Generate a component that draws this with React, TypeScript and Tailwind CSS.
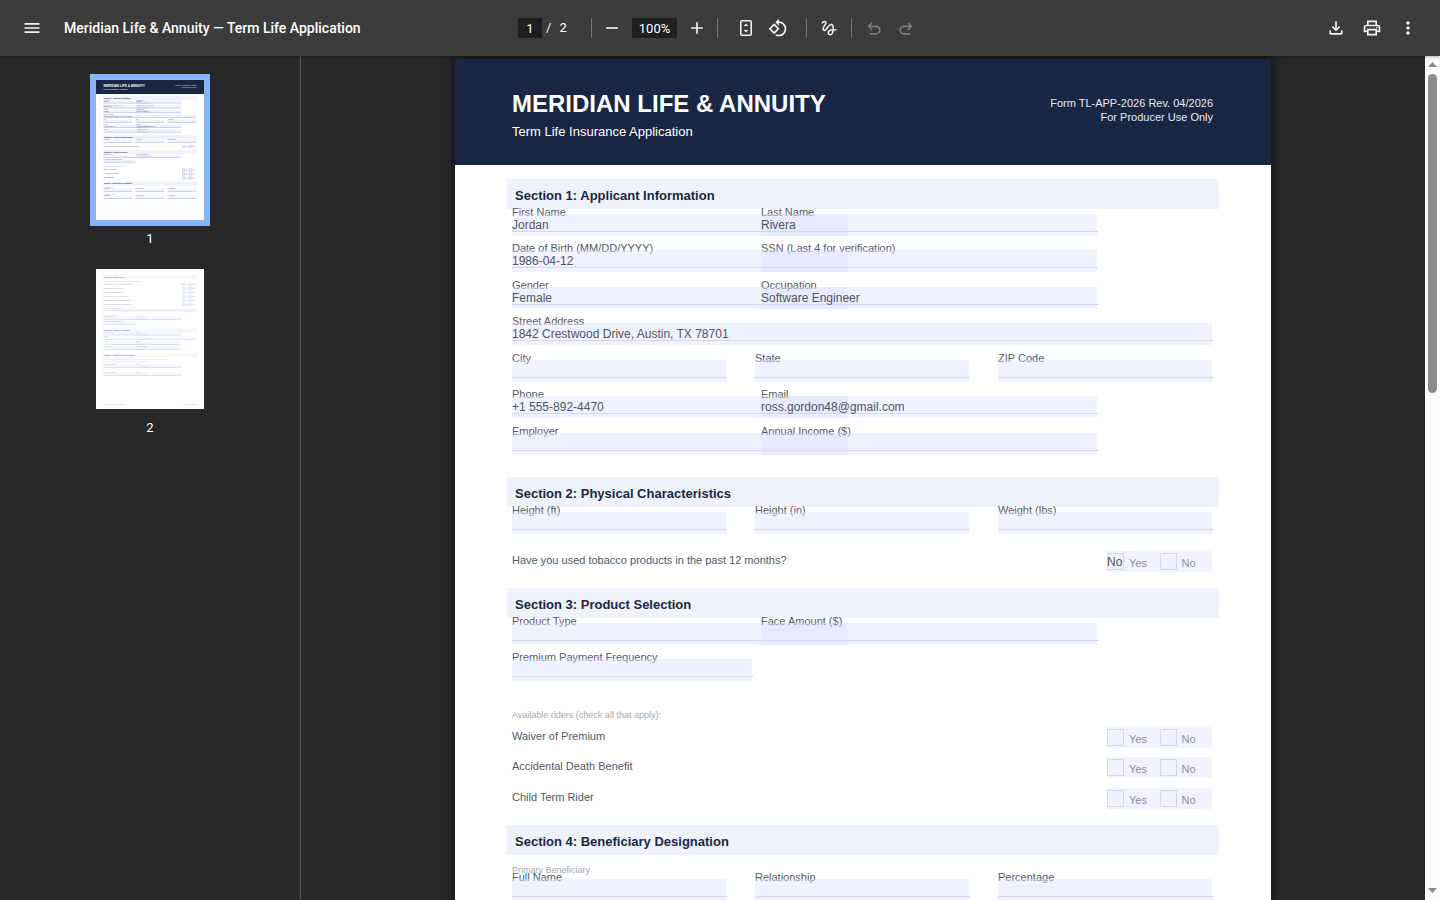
import { useId, useState } from "react";
import type { ReactNode } from "react";
import {
  MdAdd,
  MdMenu,
  MdMoreVert,
  MdOutlinePrint,
  MdOutlineRotate90DegreesCcw,
  MdRemove,
} from "react-icons/md";

interface FieldDef {
  label: string;
  value?: string;
}

type RowLayout = "full" | "half" | "pair" | "third";

interface RowDef {
  layout: RowLayout;
  fields: FieldDef[];
}

const APPLICANT_ROWS: RowDef[] = [
  { layout: "pair", fields: [{ label: "First Name", value: "Jordan" }, { label: "Last Name", value: "Rivera" }] },
  { layout: "pair", fields: [{ label: "Date of Birth (MM/DD/YYYY)", value: "1986-04-12" }, { label: "SSN (Last 4 for verification)" }] },
  { layout: "pair", fields: [{ label: "Gender", value: "Female" }, { label: "Occupation", value: "Software Engineer" }] },
  { layout: "full", fields: [{ label: "Street Address", value: "1842 Crestwood Drive, Austin, TX 78701" }] },
  { layout: "third", fields: [{ label: "City" }, { label: "State" }, { label: "ZIP Code" }] },
  { layout: "pair", fields: [{ label: "Phone", value: "+1 555-892-4470" }, { label: "Email", value: "ross.gordon48@gmail.com" }] },
  { layout: "pair", fields: [{ label: "Employer" }, { label: "Annual Income ($)" }] },
];

const PHYSICAL_ROWS: RowDef[] = [
  { layout: "third", fields: [{ label: "Height (ft)" }, { label: "Height (in)" }, { label: "Weight (lbs)" }] },
];

const PRODUCT_ROWS: RowDef[] = [
  { layout: "pair", fields: [{ label: "Product Type" }, { label: "Face Amount ($)" }] },
  { layout: "half", fields: [{ label: "Premium Payment Frequency" }] },
];

const BENEFICIARY_ROWS: RowDef[] = [
  { layout: "third", fields: [{ label: "Full Name" }, { label: "Relationship" }, { label: "Percentage" }] },
];

const RIDERS = ["Waiver of Premium", "Accidental Death Benefit", "Child Term Rider"];

const ROW_CLASS: Record<RowLayout, string> = {
  full: "grid grid-cols-1",
  half: "grid grid-cols-[241px]",
  pair: "flex",
  third: "grid grid-cols-3 gap-x-7",
};

function Field({ label, value = "", className = "" }: FieldDef & { className?: string }) {
  const id = useId();
  const [text, setText] = useState(value);

  return (
    <div className={`flex min-w-0 flex-col ${className}`}>
      <label htmlFor={id} className="h-3 text-[11px] leading-[10px] whitespace-nowrap text-[#525868]">
        {label}
      </label>
      {/* printed rule, the fillable area sits on top of it */}
      <span className="mt-3 h-px shrink-0 bg-[#c5d0e4]" />
      <input
        id={id}
        type="text"
        value={text}
        onChange={(e) => setText(e.target.value)}
        className="-mt-[18px] mr-px h-[22px] bg-[#dee2ff]/45 text-xs text-[#52545f] outline-none"
      />
    </div>
  );
}

function FieldRows({ rows, className = "-mt-[2px]" }: { rows: RowDef[]; className?: string }) {
  return (
    <div className={`pr-[6px] pl-[5px] ${className}`}>
      {rows.map((row) => (
        <div key={row.fields[0].label} className={`pb-[7px] even:pb-2 ${ROW_CLASS[row.layout]}`}>
          {row.fields.map((f, i) => (
            <Field
              key={f.label}
              {...f}
              className={row.layout !== "pair" ? "" : i === 0 ? "w-[337px]" : "-ml-[88px] w-[337px]"}
            />
          ))}
        </div>
      ))}
    </div>
  );
}

function YesNo({ question, answer }: { question: string; answer?: string }) {
  return (
    <fieldset className="flex justify-between pr-[7px] pl-[5px] even:pb-px">
      <span className="text-[11px] leading-[19px] text-[#525868]">{question}</span>
      <span className="flex h-[21px] w-[105px] bg-[#f0f2fe] pt-[2px]">
        {["Yes", "No"].map((option) => (
          <label key={option} className="relative flex w-[53px] gap-[5px] text-[11px] leading-[21px] text-[#8a90a6]">
            <input
              type="checkbox"
              aria-label={`${question} ${option}`}
              className="h-[17px] w-[17px] appearance-none border border-[#d0d9ec] checked:bg-[#8ab4f8]"
            />
            {option}
            {answer && option === "Yes" && (
              <span className="absolute top-0 left-0 text-xs leading-[18px] text-[#52545f]">{answer}</span>
            )}
          </label>
        ))}
      </span>
    </fieldset>
  );
}

function Section({ title, className = "mb-4", children }: { title: string; className?: string; children: ReactNode }) {
  return (
    <section className={className}>
      <h2 className="h-[30px] bg-[#eff2fa] pl-2 text-[13px] leading-[34px] font-bold text-[#1a2744]">{title}</h2>
      {children}
    </section>
  );
}

function Hint({ className, children }: { className: string; children: ReactNode }) {
  return <p className={`pl-[5px] text-[9px] leading-3 text-[#a3a6b0] ${className}`}>{children}</p>;
}

function ApplicationPage() {
  return (
    <article className="min-h-[1056px] w-full max-w-[816px] shrink-0 bg-white font-['Liberation_Sans',Arial,sans-serif] shadow-[0_0_8px_2px_rgba(0,0,0,0.5)]">
      <header className="flex h-[106px] items-start justify-between bg-[#1a2744] pr-[58px] pl-[57px] text-white">
        <div className="pt-[31px]">
          <h1 className="text-2xl leading-7 font-bold">MERIDIAN LIFE &amp; ANNUITY</h1>
          <p className="mt-[6px] text-[13px] leading-4">Term Life Insurance Application</p>
        </div>
        <p className="pt-[37px] text-right text-[11px] leading-[14px] text-[#e6e9f0]">
          Form TL-APP-2026 Rev. 04/2026
          <br />
          For Producer Use Only
        </p>
      </header>
      <div className="px-[52px] pt-[14px]">
        <Section title="Section 1: Applicant Information" className="mb-[15px]">
          <FieldRows rows={APPLICANT_ROWS} />
        </Section>
        <Section title="Section 2: Physical Characteristics">
          <FieldRows rows={PHYSICAL_ROWS} />
          <div className="mt-[10px]">
            <YesNo question="Have you used tobacco products in the past 12 months?" answer="No" />
          </div>
        </Section>
        <Section title="Section 3: Product Selection">
          <FieldRows rows={PRODUCT_ROWS} />
          <Hint className="mt-5 mb-[6px]">Available riders (check all that apply):</Hint>
          <div className="flex flex-col gap-[9px]">
            {RIDERS.map((r) => (
              <YesNo key={r} question={r} />
            ))}
          </div>
        </Section>
        <Section title="Section 4: Beneficiary Designation">
          <Hint className="mt-[9px]">Primary Beneficiary</Hint>
          <FieldRows rows={BENEFICIARY_ROWS} className="-mt-1" />
        </Section>
      </div>
    </article>
  );
}

/* ---------- thumbnails, drawn in page units (816 x 1056) ---------- */

function ThumbBar({ y, title }: { y: number; title: string }) {
  return (
    <>
      <rect x="52" y={y} width="712" height="30" fill="#eff2fa" />
      <text x="60" y={y + 21} fontSize="13" fontWeight="bold" fill="#1a2744">{title}</text>
    </>
  );
}

function ThumbRow({ y, layout, fields }: RowDef & { y: number }) {
  const width = { full: 700, half: 240, pair: 336, third: 215 }[layout];
  const pitch = layout === "pair" ? 249 : 243;
  return (
    <>
      {fields.map((f, i) => (
        <g key={f.label}>
          <text x={57 + i * pitch} y={y + 3} fontSize="11" fill="#4b5160">{f.label}</text>
          <rect x={57 + i * pitch} y={y + 17} width={width} height="5" fill="#9fb1d4" />
          <rect x={57 + i * pitch} y={y} width={width} height="22" fill="#dee2ff" fillOpacity="0.45" />
          <text x={57 + i * pitch} y={y + 15} fontSize="12" fill="#4d4f5a">{f.value}</text>
        </g>
      ))}
    </>
  );
}

function ThumbYesNo({ y, question }: { y: number; question: string }) {
  return (
    <>
      <text x="57" y={y + 13} fontSize="11" fill="#4b5160">{question}</text>
      <rect x="652" y={y} width="105" height="21" fill="#f0f2fe" />
      <rect x="653" y={y + 2} width="17" height="17" fill="none" stroke="#b3c1de" strokeWidth="4" />
      <rect x="706" y={y + 2} width="17" height="17" fill="none" stroke="#b3c1de" strokeWidth="4" />
      <text x="674" y={y + 16} fontSize="11" fill="#8a90a6">Yes</text>
      <text x="727" y={y + 16} fontSize="11" fill="#8a90a6">No</text>
    </>
  );
}

function FirstThumb() {
  return (
    <svg viewBox="0 0 816 1056" className="block h-[140px] w-[108px] bg-white" preserveAspectRatio="none" fontFamily="Liberation Sans, Arial, sans-serif" aria-hidden="true">
      <rect width="816" height="106" fill="#1a2744" />
      <text x="57" y="53" fontSize="24" fontWeight="bold" fill="#fff">MERIDIAN LIFE &amp; ANNUITY</text>
      <text x="57" y="77" fontSize="13" fill="#fff">Term Life Insurance Application</text>
      <text x="758" y="48" fontSize="11" fill="#e6e9f0" textAnchor="end">Form TL-APP-2026 Rev. 04/2026</text>
      <text x="758" y="62" fontSize="11" fill="#e6e9f0" textAnchor="end">For Producer Use Only</text>
      <ThumbBar y={120} title="Section 1: Applicant Information" />
      {APPLICANT_ROWS.map((row, i) => (
        <ThumbRow key={i} y={154 + Math.round(i * 36.5)} {...row} />
      ))}
      <ThumbBar y={418} title="Section 2: Physical Characteristics" />
      <ThumbRow y={453} {...PHYSICAL_ROWS[0]} />
      <ThumbYesNo y={492} question="Have you used tobacco products in the past 12 months?" />
      <ThumbBar y={529} title="Section 3: Product Selection" />
      <ThumbRow y={564} {...PRODUCT_ROWS[0]} />
      <ThumbRow y={600} {...PRODUCT_ROWS[1]} />
      <text x="57" y="659" fontSize="9" fill="#a3a6b0">Available riders (check all that apply):</text>
      {RIDERS.map((r, i) => (
        <ThumbYesNo key={r} y={668 + i * 30} question={r} />
      ))}
      <ThumbBar y={766} title="Section 4: Beneficiary Designation" />
      <text x="57" y="814" fontSize="9" fill="#a3a6b0">Primary Beneficiary</text>
      <ThumbRow y={820} {...BENEFICIARY_ROWS[0]} />
      <text x="57" y="867" fontSize="9" fill="#a3a6b0">Contingent Beneficiary</text>
      <ThumbRow y={873} {...BENEFICIARY_ROWS[0]} />
    </svg>
  );
}

const HEALTH_QUESTIONS = [
  "Heart Disease, Stroke, or Circulatory Disorder",
  "Cancer, Tumor, or Blood Disorder",
  "Diabetes or Endocrine Disorder",
  "Mental Health, Anxiety or Depression",
  "Respiratory Disease or Breathing Disorder",
  "Hospitalization or Surgery in the past 5 years",
];

function SecondThumb() {
  return (
    <svg viewBox="0 0 816 1056" className="block h-[140px] w-[108px] bg-white" preserveAspectRatio="none" fontFamily="Liberation Sans, Arial, sans-serif" aria-hidden="true">
      <g opacity="0.6">
        <ThumbBar y={46} title="Section 5: Health History" />
        <text x="57" y="96" fontSize="9" fill="#a3a6b0">Have you ever been diagnosed with or treated for any of the following?</text>
        {HEALTH_QUESTIONS.map((q, i) => (
          <ThumbYesNo key={q} y={106 + i * 30} question={q} />
        ))}
        <ThumbRow y={296} layout="full" fields={[{ label: "If yes, please provide details" }]} />
        <text x="57" y="353" fontSize="9" fill="#a3a6b0">Existing coverage information</text>
        <ThumbRow y={360} layout="pair" fields={[{ label: "Existing Carrier" }, { label: "Policy No." }]} />
        <ThumbRow y={399} layout="half" fields={[{ label: "Replacing Existing Coverage?" }]} />
        <ThumbBar y={448} title="Section 6: Producer Information" />
        <ThumbRow y={478} layout="pair" fields={[{ label: "Producer Name" }, { label: "NPN" }]} />
        <ThumbRow y={513} layout="full" fields={[{ label: "Agency" }]} />
        <ThumbRow y={550} layout="pair" fields={[{ label: "Phone" }, { label: "Email" }]} />
        <ThumbRow y={586} layout="pair" fields={[{ label: "License State" }, { label: "License Number" }]} />
        <ThumbBar y={635} title="Section 7: Signatures & Authorization" />
        <text x="57" y="686" fontSize="9" fill="#a3a6b0">I hereby declare that all statements and answers given in this application are complete and true to the best of my knowledge.</text>
        <text x="57" y="701" fontSize="9" fill="#a3a6b0">I authorize the company to obtain medical and other records needed for underwriting.</text>
        <ThumbRow y={723} layout="pair" fields={[{ label: "Applicant Signature" }, { label: "Date" }]} />
        <ThumbRow y={783} layout="pair" fields={[{ label: "Producer Signature" }, { label: "Date" }]} />
        <text x="57" y="1028" fontSize="9" fill="#7c808c">Meridian Life &amp; Annuity — Confidential</text>
        <text x="758" y="1028" fontSize="9" fill="#7c808c" textAnchor="end">Page 2 — TL-APP-2026</text>
      </g>
    </svg>
  );
}

/* ---------- viewer chrome ---------- */

function ToolButton({ label, className = "", disabled, children }: { label: string; className?: string; disabled?: boolean; children: ReactNode }) {
  return (
    <button
      type="button"
      aria-label={label}
      disabled={disabled}
      className={`flex h-8 w-8 shrink-0 items-center justify-center rounded-full text-[#f1f1f1] hover:bg-white/10 disabled:text-[#7c7c7c] ${className}`}
    >
      {children}
    </button>
  );
}

function Divider({ className = "" }: { className?: string }) {
  return <span className={`h-5 w-px shrink-0 bg-[#767676] ${className}`} />;
}

function SymbolIcon({ d, viewBox = "0 -960 960 960" }: { d: string; viewBox?: string }) {
  return (
    <svg viewBox={viewBox} className="h-5 w-5" fill="currentColor" aria-hidden="true">
      <path d={d} />
    </svg>
  );
}

function Toolbar() {
  return (
    <header className="z-10 flex h-14 shrink-0 items-center bg-[#3c3c3c] text-white shadow-[0_0_4px_rgba(0,0,0,0.5)]">
      <div className="flex min-w-0 flex-1 items-center pl-4">
        <ToolButton label="Menu"><MdMenu size={20} /></ToolButton>
        <h1 className="ml-4 truncate text-sm font-medium">Meridian Life &amp; Annuity — Term Life Application</h1>
      </div>
      <div className="flex shrink-0 items-center">
        <input aria-label="Page number" defaultValue="1" className="h-5 w-6 bg-[#1f1f1f] text-center text-[13px] outline-none" />
        <span className="flex w-[49px] gap-2 pl-1 text-[13px]">
          <span>/</span>
          <span>2</span>
        </span>
        <Divider />
        <ToolButton label="Zoom out" className="ml-1"><MdRemove size={20} /></ToolButton>
        <input aria-label="Zoom level" defaultValue="100%" className="mx-1 h-5 w-[45px] bg-[#1f1f1f] text-center text-[13px] outline-none" />
        <ToolButton label="Zoom in"><MdAdd size={20} /></ToolButton>
        <Divider className="ml-1" />
        <ToolButton label="Fit to page" className="ml-3">
          <svg viewBox="0 0 20 20" className="h-5 w-5" aria-hidden="true">
            <rect x="4.8" y="2.8" width="10.4" height="14.4" rx="1" fill="none" stroke="currentColor" strokeWidth="1.6" />
            <path d="M10 5.4 12.3 8H7.7ZM10 14.6 12.3 12H7.7Z" fill="currentColor" />
          </svg>
        </ToolButton>
        <ToolButton label="Rotate counterclockwise"><MdOutlineRotate90DegreesCcw size={20} /></ToolButton>
        <Divider className="ml-3" />
        <ToolButton label="Annotate" className="ml-[5px]">
          <svg viewBox="0 0 24 24" className="h-5 w-5" fill="none" stroke="currentColor" strokeWidth="1.9" aria-hidden="true">
            <path d="M4.6 6.5C6 4.5 8 3.6 9.2 4.7C11 6.4 5.8 10.5 6 13.2C6.2 15.6 8.7 15.3 10.2 13.2C12.4 10 14 7 16.2 7.8C19.4 9 18.8 20 14.7 20C13.4 20 12.4 19.3 12.4 18C12.4 15.8 14.8 14 17.7 14H22" />
          </svg>
        </ToolButton>
        <Divider className="ml-[7px]" />
        <ToolButton label="Undo" className="ml-[6px]" disabled>
          <SymbolIcon
            viewBox="0 -1000 960 960"
            d="M280-200v-80h284q63 0 109.5-40T720-420q0-60-46.5-100T564-560H312l104 104-56 56-200-200 200-200 56 56-104 104h252q97 0 166.5 63T800-420q0 94-69.5 157T564-200H280Z"
          />
        </ToolButton>
        <ToolButton label="Redo" disabled>
          <SymbolIcon
            viewBox="0 -1000 960 960"
            d="M396-200q-97 0-166.5-63T160-420q0-94 69.5-157T396-640h252L544-744l56-56 200 200-200 200-56-56 104-104H396q-63 0-109.5 40T240-420q0 60 46.5 100T396-280h284v80H396Z"
          />
        </ToolButton>
      </div>
      <div className="flex flex-1 justify-end gap-1 pr-4">
        <ToolButton label="Download">
          <SymbolIcon d="M480-320 280-520l56-58 104 104v-326h80v326l104-104 56 58-200 200ZM240-160q-33 0-56.5-23.5T160-240v-120h80v120h480v-120h80v120q0 33-23.5 56.5T720-160H240Z" />
        </ToolButton>
        <ToolButton label="Print"><MdOutlinePrint size={20} /></ToolButton>
        <ToolButton label="More actions"><MdMoreVert size={20} /></ToolButton>
      </div>
    </header>
  );
}

function Sidebar() {
  return (
    <aside className="flex w-[301px] shrink-0 flex-col items-center border-r border-[#5c5c5c] bg-[#28292a] pt-[18px] text-[13px] leading-4 text-white">
      <button type="button" className="flex flex-col items-center">
        <span className="bg-[#8ab4f8] p-[6px]"><FirstThumb /></span>
        <span className="mt-[5px]">1</span>
      </button>
      <button type="button" className="mt-[22px] flex flex-col items-center">
        <SecondThumb />
        <span className="mt-[11px]">2</span>
      </button>
    </aside>
  );
}

function ScrollTrack() {
  return (
    <div className="flex w-[15px] shrink-0 flex-col items-center bg-[#fcfcfc] pt-[6px] pb-[7px]" aria-hidden="true">
      <svg viewBox="0 0 9 5" className="h-[5px] w-[9px]" fill="#8b8b8b"><path d="M0 5 4.5 0 9 5Z" /></svg>
      <span className="mt-[7px] h-[319px] w-[9px] rounded-full bg-[#8b8b8b]" />
      <svg viewBox="0 0 9 5" className="mt-auto h-[5px] w-[9px]" fill="#8b8b8b"><path d="M0 0 4.5 5 9 0Z" /></svg>
    </div>
  );
}

export default function App() {
  return (
    <div className="flex h-screen flex-col overflow-hidden bg-[#282828] font-[Roboto,sans-serif]">
      <Toolbar />
      <div className="flex min-h-0 flex-1">
        <Sidebar />
        <main className="flex min-w-0 flex-1 justify-center overflow-hidden pt-[3px]">
          <ApplicationPage />
        </main>
        <ScrollTrack />
      </div>
    </div>
  );
}
